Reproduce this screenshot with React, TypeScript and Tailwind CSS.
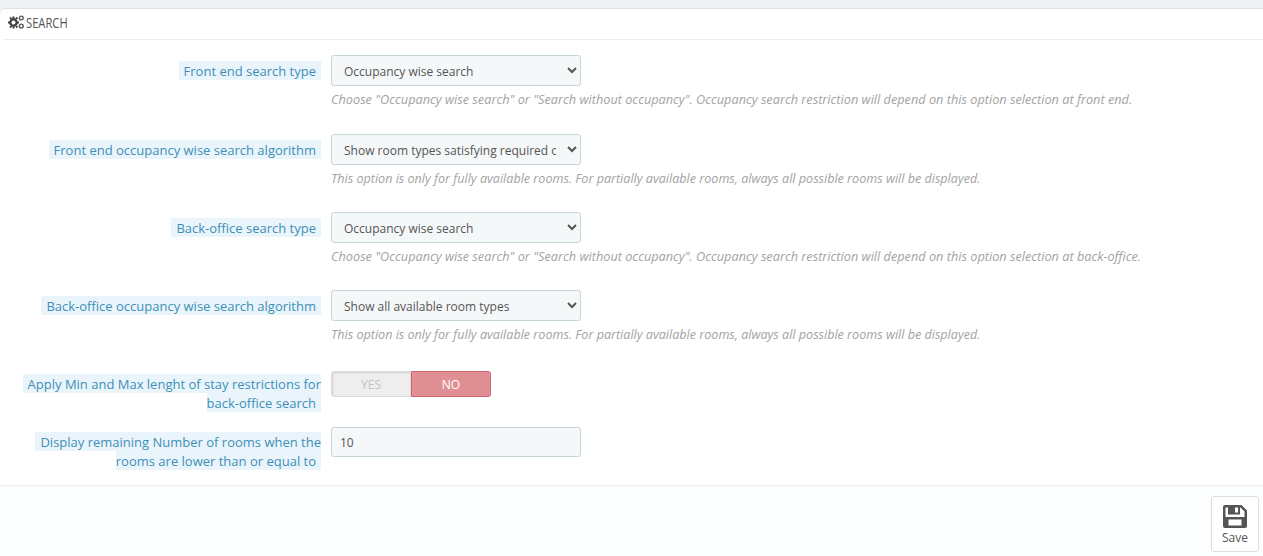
const font = { fontFamily: '"Open Sans", sans-serif' };

function Label({ children, pt }: { children: React.ReactNode; pt: string }) {
  return (
    <div className={`w-[321px] shrink-0 pl-[5px] text-right text-[13px] leading-[19px] text-[#3d8fb8] ${pt}`}>
      <span className="bg-[#eaf5fb] px-[5px] py-[0.5px]">{children}</span>
    </div>
  );
}

function SelectRow({ label, value, help, mb, size }: { label: string; value: string; help: string; mb: string; size: string }) {
  return (
    <div className={`flex ${mb}`}>
      <Label pt="pt-[6px]">{label}</Label>
      <div className="ml-[10px]">
        <select
          defaultValue={value}
          className="block h-[31px] w-[250px] rounded-[3px] border border-[#c7d6db] bg-[#f5f8f9] px-2 pt-[2px] text-[12px] text-[#555]"
        >
          <option>{value}</option>
        </select>
        <p className={`mt-[5px] italic leading-[17px] text-[#a3a3a3] ${size}`}>{help}</p>
      </div>
    </div>
  );
}

export default function App() {
  return (
    <div style={font} className="h-[556px] w-[1263px] overflow-hidden bg-[#eff1f2] pt-2">
      <div className="flex h-[548px] flex-col rounded-tl-[5px] border-t border-[#dfe1e2] bg-white">
        <div className="ml-1 flex h-[31px] items-start gap-[2px] border-b border-[#eeeeee] pl-1 pt-[4px] text-[#555]">
          <svg className="mt-[2px]" width="16" height="14" viewBox="0 0 16 14" fill="#444">
            <circle cx="5.5" cy="7.5" r="3.2" fill="none" stroke="#444" strokeWidth="2.4" />
            <path d="M4.500 1.500h2v2h-2zM4.500 11.500h2v2h-2zM0 6.500h2v2H0zM9 6.500h2v2H9zM1.300 3.200l1.400-1.400 1.400 1.400-1.400 1.400zM7.300 3.200l1.400-1.400 1.400 1.400-1.400 1.400zM1.300 11.800l1.400-1.400 1.400 1.400-1.400 1.400zM7.300 11.800l1.400-1.400 1.400 1.400-1.400 1.400z" />
            <circle cx="13.300" cy="3" r="1.900" fill="none" stroke="#555" strokeWidth="1.400" />
            <circle cx="13.300" cy="11" r="1.900" fill="none" stroke="#555" strokeWidth="1.400" />
          </svg>
          <span className="inline-block origin-left scale-x-[0.8] text-[14px] leading-[19px] whitespace-nowrap">SEARCH</span>
        </div>
        <div className="flex-1 pt-[15px]">
          <SelectRow
            mb="mb-[26px]"
            size="text-[12.72px]"
            label="Front end search type"
            value="Occupancy wise search"
            help={'Choose "Occupancy wise search" or "Search without occupancy". Occupancy search restriction will depend on this option selection at front end.'}
          />
          <SelectRow
            mb="mb-[25px]"
            size="text-[12.58px]"
            label="Front end occupancy wise search algorithm"
            value="Show room types satisfying required occupancy"
            help="This option is only for fully available rooms. For partially available rooms, always all possible rooms will be displayed."
          />
          <SelectRow
            mb="mb-[25px]"
            size="text-[12.72px]"
            label="Back-office search type"
            value="Occupancy wise search"
            help={'Choose "Occupancy wise search" or "Search without occupancy". Occupancy search restriction will depend on this option selection at back-office.'}
          />
          <SelectRow
            mb="mb-[28px]"
            size="text-[12.58px]"
            label="Back-office occupancy wise search algorithm"
            value="Show all available room types"
            help="This option is only for fully available rooms. For partially available rooms, always all possible rooms will be displayed."
          />
          <div className="mb-[15px] flex">
            <Label pt="pt-[3px]">Apply Min and Max lenght of stay restrictions for back-office search</Label>
            <div className="ml-[10px] flex h-[26px] w-[160px] text-[12px]">
              <div className="flex w-[80px] items-center justify-center rounded-l-[3px] border border-[#dcdcdc] bg-[#eeeeee] pt-[1px] text-[#c4c4c4] shadow-[inset_1px_1px_2px_rgba(0,0,0,0.12)]">YES</div>
              <div className="flex w-[80px] items-center justify-center rounded-r-[3px] border border-[#c9666e] bg-[#e08f95] pt-[1px] text-white">NO</div>
            </div>
          </div>
          <div className="flex">
            <Label pt="pt-[5px]">Display remaining Number of rooms when the rooms are lower than or equal to</Label>
            <div className="ml-[10px] flex h-[30px] w-[250px] items-center rounded-[3px] border border-[#c7d6db] bg-[#f5f8f9] pl-2 pt-[1px] text-[12px] text-[#555]">10</div>
          </div>
        </div>
        <div className="flex h-[71px] justify-end border-t border-[#eeeeee] bg-[#fcfdfe] pr-1 pt-[10px]">
          <div className="flex h-[56px] w-[48px] flex-col items-center rounded-[3px] border border-[#dddddd] bg-white pt-[8px] text-[12px] text-[#555]">
            <svg width="24" height="23" viewBox="0 0 24 23" fill="#555" fillRule="evenodd">
              <path d="M2 0H18.500L24 5.500V21a2 2 0 0 1-2 2H2a2 2 0 0 1-2-2V2a2 2 0 0 1 2-2ZM2.500 2.500V12H21.500V6.500L17.500 2.500H17V9.500H5V2.500ZM12 2.500V7.500H15V2.500ZM5.500 14.500V20.500H18.500V14.500Z" />
            </svg>
            <span className="mt-[2px] leading-[16px]">Save</span>
          </div>
        </div>
      </div>
    </div>
  );
}
